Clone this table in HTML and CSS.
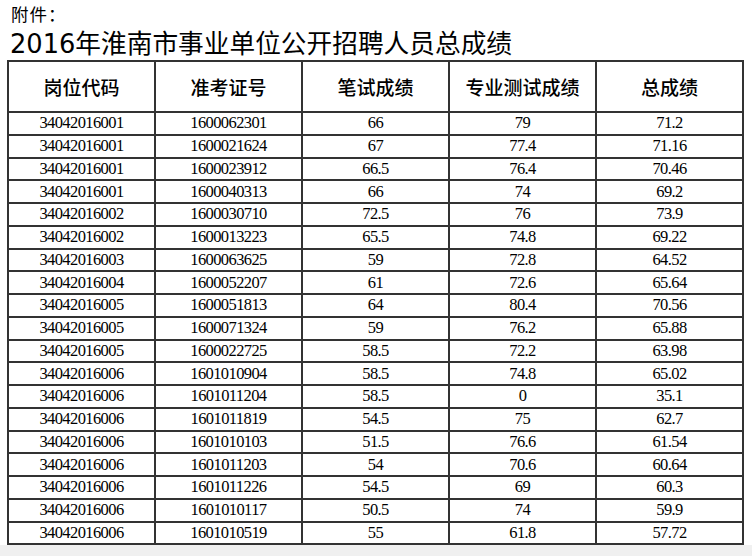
FILE: index.html
```html
<!DOCTYPE html>
<html lang="zh-CN">
<head>
<meta charset="utf-8">
<title>2016年淮南市事业单位公开招聘人员总成绩</title>
<link rel="stylesheet" href="styles.css">
</head>
<body>
<div class="page">
  <div class="attach">附件：</div>
  <h1 class="title">2016年淮南市事业单位公开招聘人员总成绩</h1>
  <table class="scores">
    <colgroup><col><col><col><col><col></colgroup>
    <thead>
      <tr><th>岗位代码</th><th>准考证号</th><th>笔试成绩</th><th>专业测试成绩</th><th>总成绩</th></tr>
    </thead>
    <tbody>
      <tr><td>34042016001</td><td>1600062301</td><td>66</td><td>79</td><td>71.2</td></tr>
      <tr><td>34042016001</td><td>1600021624</td><td>67</td><td>77.4</td><td>71.16</td></tr>
      <tr><td>34042016001</td><td>1600023912</td><td>66.5</td><td>76.4</td><td>70.46</td></tr>
      <tr><td>34042016001</td><td>1600040313</td><td>66</td><td>74</td><td>69.2</td></tr>
      <tr><td>34042016002</td><td>1600030710</td><td>72.5</td><td>76</td><td>73.9</td></tr>
      <tr><td>34042016002</td><td>1600013223</td><td>65.5</td><td>74.8</td><td>69.22</td></tr>
      <tr><td>34042016003</td><td>1600063625</td><td>59</td><td>72.8</td><td>64.52</td></tr>
      <tr><td>34042016004</td><td>1600052207</td><td>61</td><td>72.6</td><td>65.64</td></tr>
      <tr><td>34042016005</td><td>1600051813</td><td>64</td><td>80.4</td><td>70.56</td></tr>
      <tr><td>34042016005</td><td>1600071324</td><td>59</td><td>76.2</td><td>65.88</td></tr>
      <tr><td>34042016005</td><td>1600022725</td><td>58.5</td><td>72.2</td><td>63.98</td></tr>
      <tr><td>34042016006</td><td>1601010904</td><td>58.5</td><td>74.8</td><td>65.02</td></tr>
      <tr><td>34042016006</td><td>1601011204</td><td>58.5</td><td>0</td><td>35.1</td></tr>
      <tr><td>34042016006</td><td>1601011819</td><td>54.5</td><td>75</td><td>62.7</td></tr>
      <tr><td>34042016006</td><td>1601010103</td><td>51.5</td><td>76.6</td><td>61.54</td></tr>
      <tr><td>34042016006</td><td>1601011203</td><td>54</td><td>70.6</td><td>60.64</td></tr>
      <tr><td>34042016006</td><td>1601011226</td><td>54.5</td><td>69</td><td>60.3</td></tr>
      <tr><td>34042016006</td><td>1601010117</td><td>50.5</td><td>74</td><td>59.9</td></tr>
      <tr><td>34042016006</td><td>1601010519</td><td>55</td><td>61.8</td><td>57.72</td></tr>
      <tr class="cut"><td></td><td></td><td></td><td></td><td></td></tr>
    </tbody>
  </table>
</div>
</body>
</html>
```
FILE: styles.css
```css
html, body {
  margin: 0;
  padding: 0;
}
body {
  background: #f0f0f0;
  font-family: "DejaVu Sans", "Noto Sans CJK SC", sans-serif;
  color: #000;
}
.page {
  width: 752px;
  height: 545px;
  overflow: hidden;
  background: #fff;
}
.attach {
  font-family: "Noto Sans CJK SC", sans-serif;
  font-size: 17.5px;
  letter-spacing: 1px;
  line-height: 20px;
  padding: 4px 0 0 11px;
}
.title {
  margin: 4px 0 0 0;
  padding-left: 10px;
  font-family: "DejaVu Sans", "Noto Sans CJK SC", sans-serif;
  font-size: 25.7px;
  font-weight: normal;
  line-height: 32px;
  white-space: nowrap;
}
.scores {
  margin-left: 7px;
  border-collapse: collapse;
  table-layout: fixed;
  width: 737px;
}
.scores col {
  width: 147px;
}
.scores th,
.scores td {
  border: 2px solid #333;
  padding: 0;
  text-align: center;
  vertical-align: middle;
}
.scores th {
  height: 49px;
  font-family: "Noto Sans CJK SC", sans-serif;
  font-size: 19px;
  font-weight: 500;
}
.scores td {
  height: 20.75px;
  font-family: "Liberation Serif", "Noto Sans CJK SC", serif;
  font-size: 16.5px;
  letter-spacing: -0.6px;
  line-height: 18px;
}
```
